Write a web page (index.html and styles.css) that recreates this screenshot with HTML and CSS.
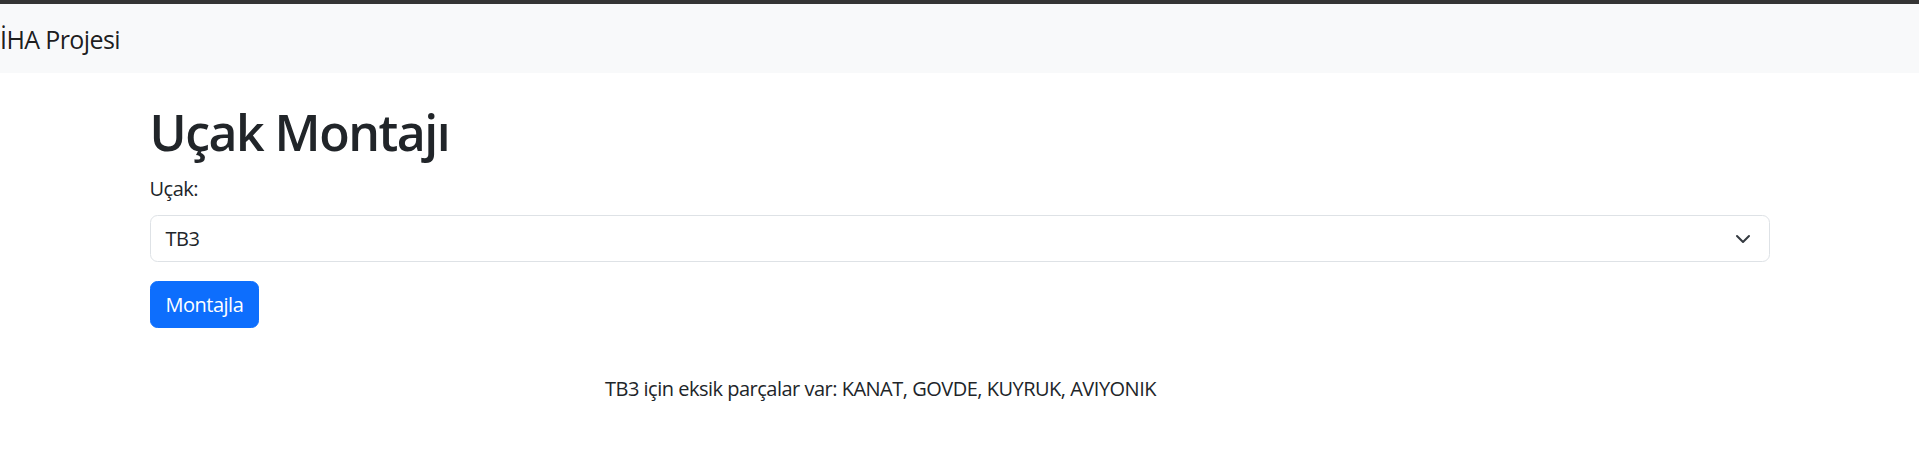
FILE: index.html
```html
<!DOCTYPE html>
<html lang="tr">
<head>
<meta charset="utf-8">
<title>Uçak Montajı</title>
<link rel="stylesheet" href="styles.css">
</head>
<body>
<div class="topbar"></div>
<nav class="navbar">
  <span class="brand">İHA Projesi</span>
</nav>
<main class="container">
  <h1 class="title">Uçak Montajı</h1>
  <label class="label" for="ucak">Uçak:</label>
  <div class="select" id="ucak">
    <span class="select-value">TB3</span>
    <svg class="chevron" width="16" height="16" viewBox="0 0 16 16" aria-hidden="true"><path d="M2 5l6 6 6-6" fill="none" stroke="#343a40" stroke-width="2" stroke-linecap="round" stroke-linejoin="round"/></svg>
  </div>
  <button class="btn" type="button">Montajla</button>
  <p class="result">TB3 için eksik parçalar var: KANAT, GOVDE, KUYRUK, AVIYONIK</p>
</main>
</body>
</html>
```
FILE: styles.css
```css
* { box-sizing: border-box; }
html, body { margin: 0; padding: 0; }
body {
  font-family: "Open Sans", "Noto Sans", sans-serif;
  font-size: 20px;
  line-height: 30px;
  letter-spacing: -0.5px;
  color: #212529;
  background: #fff;
}
.topbar { height: 4px; background: #343434; }
.navbar {
  height: 69px;
  background: #f8f9fa;
  display: flex;
  align-items: center;
}
.brand {
  font-size: 25px;
  line-height: 30px;
  letter-spacing: -0.6px;
  color: rgba(0,0,0,0.9);
}
.container {
  width: 1620px;
  margin: 0 auto;
}
.title {
  font-size: 50px;
  font-weight: 600;
  line-height: 60px;
  letter-spacing: -1.5px;
  margin: 29px 0 12px;
}
.label { display: block; margin-bottom: 11px; }
.select {
  height: 47px;
  border: 1px solid #dee2e6;
  border-radius: 7.5px;
  padding: 0 18px 0 15px;
  display: flex;
  align-items: center;
  justify-content: space-between;
}
.chevron { display: block; }
.btn {
  margin-top: 19px;
  height: 47px;
  padding: 0 15px;
  border: 1px solid #0d6efd;
  border-radius: 7.5px;
  background: #0d6efd;
  color: #fff;
  font: inherit;
  letter-spacing: inherit;
  display: block;
}
.result {
  margin: 46px 158px 0 0;
  text-align: center;
}
```
